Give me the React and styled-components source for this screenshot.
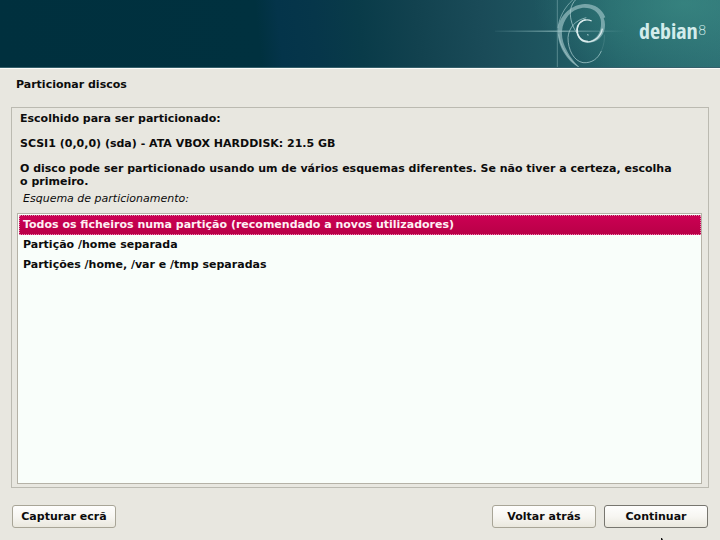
import React, { useState } from "react";
import styled, { createGlobalStyle } from "styled-components";

const GlobalStyle = createGlobalStyle`
  * { box-sizing: border-box; }
  body {
    margin: 0;
    overflow: hidden;
    background: #e8e7e0;
    color: #0c0c0c;
    font: bold 11px/13px "DejaVu Sans", Verdana, sans-serif;
  }
`;

const Page = styled.div`
  display: flex;
  flex-direction: column;
  min-height: 100vh;
  background: #e8e7e0;
`;

const Banner = styled.header`
  display: flex;
  align-items: stretch;
  justify-content: flex-end;
  height: 69px;
  border-bottom: 1px solid #fbfcf9;
  box-shadow: inset 0 -1px #35606b;
  background:
    radial-gradient(ellipse 150px 80px at 95% 5%, rgba(62, 145, 136, 0.6), rgba(62, 145, 136, 0) 100%),
    linear-gradient(84deg, #00303e 0%, #00313f 36%, #04344a 39%, #06364a 44%, #093b49 50%, #12424f 58%, #1a4b58 67%, #1e5660 76%, #24646a 85%, #2c6e73 100%);
`;

const Swirl = styled.svg`
  display: block;
  width: 159px;
  height: 67px;
`;

const Brand = styled.div`
  display: flex;
  align-items: flex-start;
  width: 81px;
  padding-top: 18px;
  color: #d3eceb;
`;

const BrandName = styled.span`
  font: bold 22px/25px "Liberation Sans Narrow", "Open Sans Condensed", "DejaVu Sans Condensed", sans-serif;
`;

const BrandVersion = styled.span`
  font: 300 14px/24px "DejaVu Sans", sans-serif;
`;

const Title = styled.h1`
  margin: 0;
  padding: 9px 16px 16px;
  font: inherit;
`;

const Main = styled.main`
  display: flex;
  flex: 1;
  flex-direction: column;
  margin: 0 11px;
  padding: 4px 6px 3px;
  border: 1px solid #bbbab1;
`;

const Message = styled.div`
  display: flex;
  flex-direction: column;
  gap: 12px;
  padding: 0 24px 0 2px;
`;

const Paragraph = styled.p`
  margin: 0;
`;

const Prompt = styled.h2`
  margin: 0;
  padding: 4px 5px 8px;
  font: inherit;
  font-style: italic;
  font-weight: normal;
`;

const SchemeList = styled.div`
  flex: 1;
  margin: 0 0 0 -1px;
  padding: 1px 0 1px 1px;
  border: 1px solid #b5b2a7;
  background: #f9fefa;
`;

const Scheme = styled.label`
  display: block;
  height: 20px;
  padding: 2px 3px;
  border: 1px dotted ${(p) => (p.$selected ? "#e58aae" : "transparent")};
  background: ${(p) => (p.$selected ? "linear-gradient(#cb0053, #b90047)" : "transparent")};
  color: ${(p) => (p.$selected ? "#fff0f4" : "inherit")};
`;

const SchemeInput = styled.input`
  position: absolute;
  opacity: 0;
  pointer-events: none;
`;

const Actions = styled.footer`
  display: flex;
  gap: 8px;
  padding: 17px 12px 12px;
`;

const Button = styled.button`
  min-width: 104px;
  height: 23px;
  margin: 0;
  margin-right: ${(p) => (p.$start ? "auto" : "0")};
  padding: 0 7px;
  border: 1px solid ${(p) => (p.$primary ? "#77766f" : "#a8a597")};
  border-radius: 3px;
  background: linear-gradient(#fefefd, #f7f6f2 50%, #eae8de);
  color: inherit;
  font: inherit;
`;

const Pointer = styled.svg`
  position: absolute;
  right: 56px;
  bottom: 0;
  width: 4px;
  height: 2px;
`;

const schemes = [
  "Todos os ficheiros numa partição (recomendado a novos utilizadores)",
  "Partição /home separada",
  "Partições /home, /var e /tmp separadas",
];

function DebianSwirl() {
  return (
    <Swirl viewBox="0 0 477 201" aria-hidden="true">
      <defs>
        <linearGradient id="ray" x1="45" x2="435" y1="0" y2="0" gradientUnits="userSpaceOnUse">
          <stop offset="0" stopColor="#8dbdc0" stopOpacity="0.1" />
          <stop offset="0.5" stopColor="#a9cfd0" stopOpacity="0.9" />
          <stop offset="1" stopColor="#8dbdc0" stopOpacity="0" />
        </linearGradient>
      </defs>
      <rect x="45" y="92" width="390" height="3" fill="url(#ray)" />
      <path d="M232 0V201" stroke="#8fb8bc" strokeWidth="3" opacity="0.5" />
      <g fill="none" stroke="#a8cccf">
        <path
          d="M376 52C366 26 343 11 314 12C276 14 239 43 234 86C229 134 261 184 299 203C270 174 243 132 246 94C249 57 274 28 305 24C334 21 356 35 362 58C366 82 359 106 340 118L322 128C350 129 370 110 374 86C376 74 375 64 371 54Z"
          fill="#a1c6ca"
          stroke="none"
          opacity="0.65"
        />
        <path d="M234 84C238 50 254 22 279 -1" strokeWidth="3" opacity="0.6" />
        <path d="M236 103C240 137 262 174 297 202" strokeWidth="3" opacity="0.6" />
        <path d="M288 -2C270 16 269 39 273 59C276 74 283 89 291 99" strokeWidth="3" opacity="0.75" />
        <path d="M319 53C286 60 266 84 264 113C264 151 282 183 309 188C336 190 354 176 364 153" strokeWidth="3" opacity="0.75" />
        <path d="M364 153C372 134 374 119 373 104" strokeWidth="2" opacity="0.25" />
        <path d="M335 63C317 54 298 64 292 81C286 104 301 125 322 126C346 125 363 108 367 86" stroke="#d5e8e9" strokeWidth="4" />
        <path d="M317 59C295 63 288 85 293 101C298 116 310 124 324 124" stroke="#dceced" strokeWidth="4" />
        <path d="M321 104L326 105" strokeWidth="3" />
      </g>
    </Swirl>
  );
}

export default function App() {
  const [selected, setSelected] = useState(0);

  return (
    <Page>
      <GlobalStyle />
      <Banner>
        <DebianSwirl />
        <Brand>
          <BrandName>debian</BrandName>
          <BrandVersion>8</BrandVersion>
        </Brand>
      </Banner>
      <Title>Particionar discos</Title>
      <Main>
        <Message>
          <Paragraph>Escolhido para ser particionado:</Paragraph>
          <Paragraph>SCSI1 (0,0,0) (sda) - ATA VBOX HARDDISK: 21.5 GB</Paragraph>
          <Paragraph>
            O disco pode ser particionado usando um de vários esquemas diferentes. Se não tiver a certeza, escolha o
            primeiro.
          </Paragraph>
        </Message>
        <Prompt id="scheme-label">Esquema de particionamento:</Prompt>
        <SchemeList role="radiogroup" aria-labelledby="scheme-label">
          {schemes.map((name, i) => (
            <Scheme key={name} $selected={i === selected}>
              <SchemeInput type="radio" name="scheme" checked={i === selected} onChange={() => setSelected(i)} />
              {name}
            </Scheme>
          ))}
        </SchemeList>
      </Main>
      <Actions>
        <Button type="button" $start>Capturar ecrã</Button>
        <Button type="button">Voltar atrás</Button>
        <Button type="button" $primary>Continuar</Button>
      </Actions>
      <Pointer viewBox="0 0 4 2" aria-hidden="true">
        <path d="M1 0H2L3 2H1Z" fill="#111" />
      </Pointer>
    </Page>
  );
}
